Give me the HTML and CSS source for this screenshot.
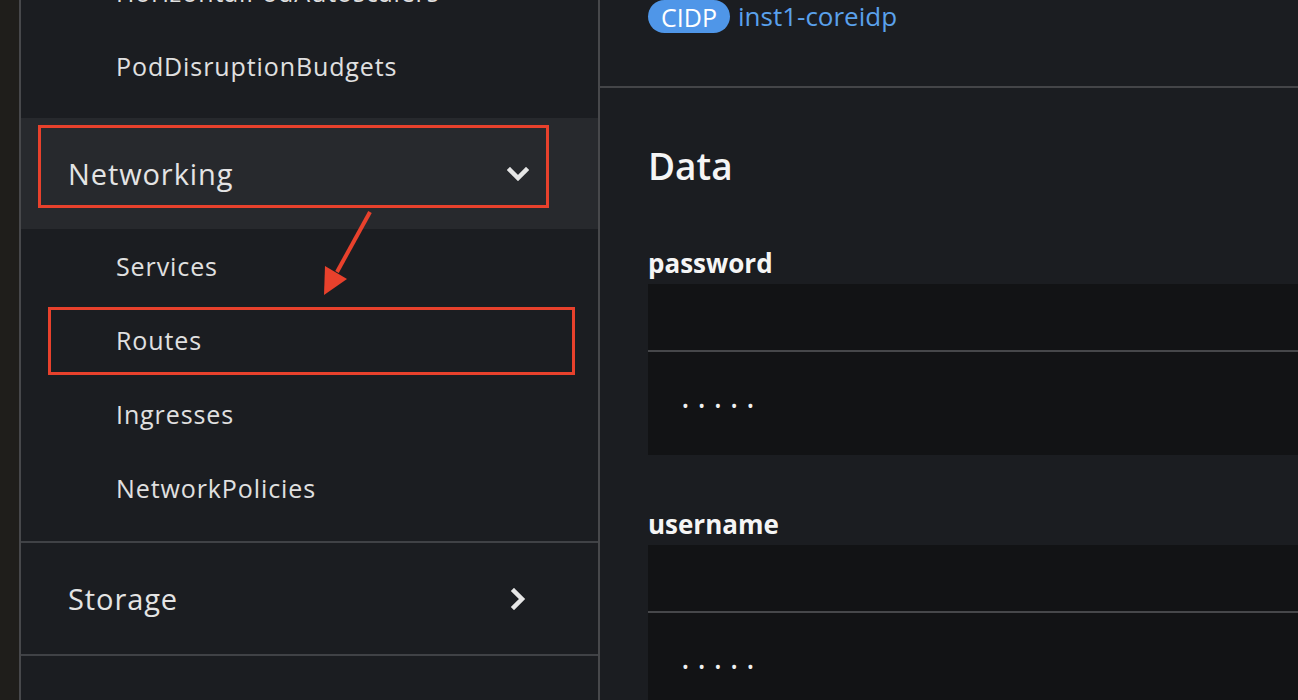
FILE: index.html
```html
<!DOCTYPE html>
<html>
<head>
<meta charset="utf-8">
<link rel="stylesheet" href="styles.css">
</head>
<body>
<div class="edge"></div>
<nav class="sidebar">
  <div class="group">
    <ul class="sublist first">
      <li class="subitem">HorizontalPodAutoscalers</li>
      <li class="subitem">PodDisruptionBudgets</li>
    </ul>
  </div>
  <div class="group">
    <div class="group-head active">
      <span>Networking</span>
      <svg class="chev" width="22" height="14" viewBox="0 0 22 14"><path d="M3 3 L11 11 L19 3" fill="none" stroke="#e6e6e6" stroke-width="4.5" stroke-linecap="square"/></svg>
      <div class="mark mark-net"></div>
    </div>
    <ul class="sublist">
      <li class="subitem">Services</li>
      <li class="subitem">Routes<div class="mark mark-routes"></div></li>
      <li class="subitem">Ingresses</li>
      <li class="subitem">NetworkPolicies</li>
    </ul>
  </div>
  <div class="group sep">
    <div class="group-head">
      <span>Storage</span>
      <svg class="chev" width="22" height="22" viewBox="0 0 22 22"><path d="M7 3 L15 11 L7 19" fill="none" stroke="#e6e6e6" stroke-width="4.5" stroke-linecap="square"/></svg>
    </div>
  </div>
  <div class="group sep">
    <div class="group-head">
      <span>Builds</span>
      <svg class="chev" width="22" height="22" viewBox="0 0 22 22"><path d="M7 3 L15 11 L7 19" fill="none" stroke="#e6e6e6" stroke-width="4.5" stroke-linecap="square"/></svg>
    </div>
  </div>
  <svg class="arrow" width="577" height="700" viewBox="0 0 577 700">
    <line x1="349" y1="212" x2="316" y2="272" stroke="#e8412c" stroke-width="4"/>
    <polygon points="303,295 304,266 326,279" fill="#e8412c"/>
  </svg>
</nav>
<main class="main">
  <header class="head">
    <span class="badge">CIDP</span>
    <span class="link">inst1-coreidp</span>
  </header>
  <section class="data">
    <h2 class="title">Data</h2>
    <div class="field">
      <div class="label">password</div>
      <div class="code">
        <div class="code-top"></div>
        <div class="code-body">•••••</div>
      </div>
    </div>
    <div class="field">
      <div class="label">username</div>
      <div class="code">
        <div class="code-top"></div>
        <div class="code-body">•••••</div>
      </div>
    </div>
  </section>
</main>
</body>
</html>
```

FILE: styles.css
```css
* { box-sizing: border-box; }
html, body { margin: 0; padding: 0; }
body {
  display: flex;
  width: 1298px;
  height: 700px;
  overflow: hidden;
  background: #1b1d21;
  font-family: "Open Sans", "Noto Sans", sans-serif;
  color: #e2e2e2;
}
.edge {
  width: 21px;
  flex: none;
  background: #1f1e1b;
  border-right: 2px solid #47484b;
}
.sidebar {
  position: relative;
  width: 579px;
  flex: none;
  background: #1b1d21;
  border-right: 2px solid #47484b;
  overflow: hidden;
}
.sublist {
  list-style: none;
  margin: 0;
  padding: 0 0 15px 0;
}
.sublist.first { margin-top: -45px; }
.subitem {
  position: relative;
  height: 74px;
  display: flex;
  align-items: center;
  padding-left: 95px;
  font-size: 25px;
  letter-spacing: 0.9px;
  color: #e0e0e0;
}
.group-head {
  position: relative;
  height: 111px;
  display: flex;
  align-items: center;
  justify-content: space-between;
  padding: 0 69px 0 47px;
  font-size: 29px;
  letter-spacing: 0.9px;
  color: #e4e4e4;
}
.group-head.active { background: #27292d; }
.group:nth-child(2) .sublist { padding-bottom: 16px; }
.sep { border-top: 2px solid #404246; }
.mark {
  position: absolute;
  border: 3px solid #e8412c;
  pointer-events: none;
}
.mark-net { left: 17px; top: 7px; width: 511px; height: 83px; }
.mark-routes { left: 27px; top: 4px; width: 527px; height: 68px; }
.arrow { position: absolute; left: 0; top: 0; pointer-events: none; }

.main {
  flex: 1;
  background: #1b1d21;
  overflow: hidden;
}
.head {
  height: 88px;
  border-bottom: 2px solid #444548;
  padding: 0 0 0 48px;
  display: flex;
  align-items: flex-start;
  gap: 8px;
}
.badge {
  display: inline-flex;
  align-items: center;
  justify-content: center;
  height: 33px;
  width: 82px;
  border-radius: 17px;
  background: #4f96e8;
  color: #ffffff;
  font-size: 25px;
}
.link {
  font-size: 26px;
  color: #5aa1ec;
  line-height: 33px;
}
.data { padding: 0 0 0 48px; }
.title {
  margin: 0;
  padding-top: 56px;
  height: 152px;
  font-size: 37px;
  font-weight: 600;
  color: #f5f5f5;
  line-height: 44px;
}
.label {
  font-size: 26px;
  font-weight: 700;
  color: #f5f5f5;
  height: 44px;
  line-height: 46px;
}
.field + .field { margin-top: 46px; }
.code { background: #121315; }
.code-top {
  height: 68px;
  border-bottom: 2px solid #46474a;
}
.code-body {
  height: 103px;
  padding-left: 34px;
  padding-top: 4px;
  display: flex;
  align-items: center;
  font-size: 18px;
  letter-spacing: 9.5px;
  color: #f0f0f0;
}
```
